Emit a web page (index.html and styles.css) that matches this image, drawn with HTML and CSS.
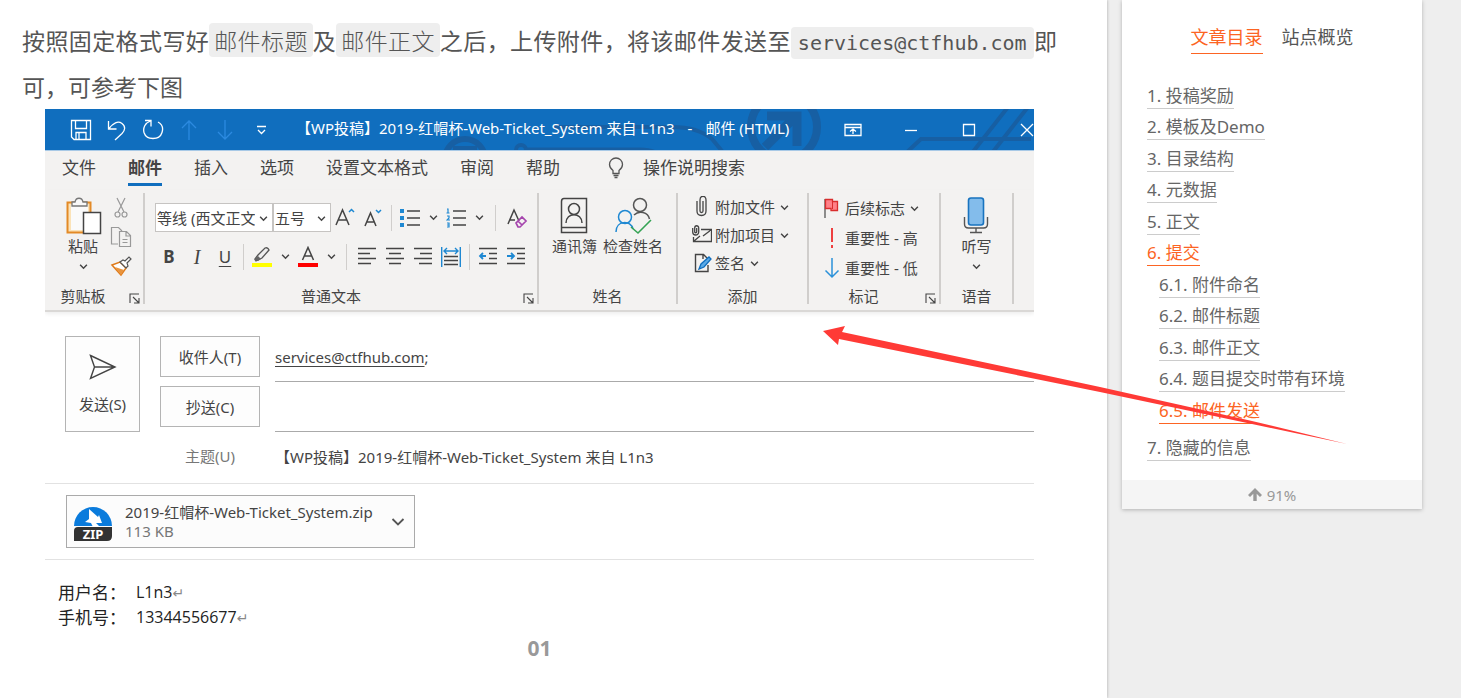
FILE: index.html
```html
<!DOCTYPE html>
<html lang="zh-CN">
<head>
<meta charset="utf-8">
<title>投稿说明</title>
<link rel="stylesheet" href="styles.css">
</head>
<body>
<svg width="0" height="0" class="defs" aria-hidden="true">
  <symbol id="chev" viewBox="0 0 8 8"><path d="M1 2.500 4 5.500 7 2.500" fill="none" stroke="#444" stroke-width="1.3"/></symbol>
  <symbol id="launch" viewBox="0 0 11 11"><path d="M1 10V1h9M4 4l5.500 5.500M10 5v5H5" fill="none" stroke="#444" stroke-width="1.100"/></symbol>
</svg>
<div class="page">
  <main class="article">
    <p class="lead">按照固定格式写好<code class="zh">邮件标题</code>及<code class="zh">邮件正文</code>之后，上传附件，将该邮件发送至<code>services@ctfhub.com</code>即可，可参考下图</p>
    <figure class="shot">
      <div class="window">
        <header class="titlebar">
          <svg class="deco" width="600" height="41" viewBox="0 0 600 41" fill="none" stroke="#175fa3" stroke-width="6">
            <circle cx="31" cy="50" r="20"/><path d="M19 41h24" stroke-width="8"/><circle cx="87" cy="41" r="5" stroke-width="4"/><path d="M90 40h116q14 0 20 6" stroke-width="3"/><path d="M120 18h118q26 0 40 12l10 12" stroke-width="4"/><circle cx="350" cy="18" r="33" stroke-width="8"/><path d="M331 38l28-28M333 7h30v30" stroke-width="9"/><path d="M472 44l15-14h110M538 44l36-46M558 44l36-46" stroke-width="4"/>
          </svg>
          <div class="quick">
            <button aria-label="保存"><svg width="22" height="22" viewBox="0 0 22 22"><path d="M1.500 1.500h19v19H4l-2.500-2.500zM5.500 1.500v8h11v-8M6 20.500v-7h10v7M9 14v6"/></svg></button>
            <button aria-label="撤消"><svg width="22" height="22" viewBox="0 0 22 22"><path d="M2.500 2v8h8M3 9.500C7 4 12 1.500 16 4.500s3 7 0 10L9 21"/></svg></button>
            <button aria-label="恢复"><svg width="22" height="22" viewBox="0 0 22 22"><path d="M3 1.500h6v6M8.500 2C3 4 .8 9 2 13.500c2.500 8 15.500 8 18 0C21.500 9 19.500 5 16 3"/></svg></button>
            <button class="dim" aria-label="上一项"><svg width="22" height="22" viewBox="0 0 22 22"><path d="M11 21V2M4 9l7-7 7 7"/></svg></button>
            <button class="dim" aria-label="下一项"><svg width="22" height="22" viewBox="0 0 22 22"><path d="M11 1v19M4 13l7 7 7-7"/></svg></button>
            <button aria-label="自定义"><svg width="22" height="22" viewBox="0 0 22 22"><path d="M7 7.500h9M8 11l3.500 3.500L15 11"/></svg></button>
          </div>
          <div class="title"><span>【WP投稿】2019-红帽杯-Web-Ticket_System 来自 L1n3</span><span>-</span><span>邮件 (HTML)</span></div>
          <div class="controls">
            <button aria-label="功能区选项"><svg width="18" height="14" viewBox="0 0 18 14"><path d="M1 1.500h16v11H1zM1 4.500h16M9 11V6M6 8.500 9 6l3 2.500"/></svg></button>
            <button aria-label="最小化"><svg width="14" height="14" viewBox="0 0 14 14"><path d="M1 7.500h12"/></svg></button>
            <button aria-label="最大化"><svg width="14" height="14" viewBox="0 0 14 14"><path d="M1.500 1.500h11v11h-11z"/></svg></button>
            <button aria-label="关闭"><svg width="14" height="14" viewBox="0 0 14 14"><path d="M1 1l12 12M13 1 1 13"/></svg></button>
          </div>
        </header>
        <nav class="tabs">
          <button>文件</button><button class="on">邮件</button><button>插入</button><button>选项</button><button>设置文本格式</button><button>审阅</button><button>帮助</button>
          <button class="tell"><svg width="18" height="22" viewBox="0 0 18 22" fill="none" stroke="#555" stroke-width="1.300"><path d="M6 16.500v-3C3.500 11.500 2.500 10 2.500 7.500a6.500 6.500 0 0 1 13 0c0 2.500-1 4-3.500 6v3zM6.500 18.500h5M7.500 20.500h3"/></svg>操作说明搜索</button>
        </nav>
        <div class="ribbon">
          <section class="group g-clip">
            <div class="body">
              <button class="big"><svg width="38" height="40" viewBox="0 0 38 40" fill="none"><path d="M3.500 6.500h23v30h-23z" fill="#fbe3b8" stroke="#e38a26" stroke-width="2"/><path d="M7 9h17v25H7z" fill="#fafafa"/><path d="M8 10V6h3c1-5 7-5 8 0h4v4z" fill="#f8f8f8" stroke="#777" stroke-width="1.300"/><path d="M19.500 16.500h17v21h-17z" fill="#fff" stroke="#444" stroke-width="1.500"/></svg><span>粘贴</span><svg class="chev"><use href="#chev"/></svg></button>
              <div class="stack">
                <button aria-label="剪切"><svg width="22" height="22" viewBox="0 0 22 22" fill="none" stroke="#999" stroke-width="1.200"><path d="M7 1l7 14M15 1 8 15"/><circle cx="7.500" cy="17.500" r="2.500"/><circle cx="14.500" cy="17.500" r="2.500"/></svg></button>
                <button aria-label="复制"><svg width="22" height="22" viewBox="0 0 22 22" fill="none" stroke="#999" stroke-width="1.200"><path d="M8 18H1.500V1.500h7L12 5M9.500 5.500h7l4 4v11h-11zM16 6v4h4M12.500 13.500h5M12.500 16.500h5"/></svg></button>
                <button aria-label="格式刷"><svg width="22" height="22" viewBox="0 0 22 22"><path d="M2 10l8-3 6 6-5 7z" fill="#fff" stroke="#e07b1a" stroke-width="1.500"/><path d="M5 12l9 3-3 5z" fill="#e8943e"/><path d="M10 7l3-2 2 1 4-4 2 2-4 4 1 3-2 2z" fill="#fff" stroke="#555" stroke-width="1.200"/></svg></button>
              </div>
            </div>
            <h3>剪贴板</h3><svg class="launch"><use href="#launch"/></svg>
          </section>
          <section class="group g-text">
            <div class="body rows">
              <div class="row">
                <label class="pick font"><select aria-label="字体"><option>等线 (西文正文)</option></select><svg class="chev"><use href="#chev"/></svg></label>
                <label class="pick size"><select aria-label="字号"><option>五号</option></select><svg class="chev"><use href="#chev"/></svg></label>
                <button class="tool" aria-label="增大字号"><svg width="20" height="22" viewBox="0 0 20 22" fill="none" stroke="#444" stroke-width="1.500"><path d="M1 18 7.500 3 14 18M3.500 13h8"/><path d="M14 5l2.500-2.500L19 5" stroke="#1e88d2"/></svg></button>
                <button class="tool" aria-label="减小字号"><svg width="20" height="22" viewBox="0 0 20 22" fill="none" stroke="#444" stroke-width="1.500"><path d="M2 19 7.500 6 13 19M4 15h7"/><path d="M13 3l2.500 2.500L18 3" stroke="#1e88d2"/></svg></button>
                <i class="bar"></i>
                <button class="tool" aria-label="项目符号"><svg width="20" height="20" viewBox="0 0 20 20"><path d="M0 1h4v4H0zM0 8h4v4H0zM0 15h4v4H0z" fill="#1e88d2"/><path d="M7 3h13M7 10h13M7 17h13" stroke="#444" stroke-width="1.300"/></svg></button>
                <button class="drop" aria-label="符号样式"><svg class="chev"><use href="#chev"/></svg></button>
                <button class="tool" aria-label="编号"><svg width="20" height="20" viewBox="0 0 20 20" fill="none"><path d="M1 1h1v4M.5 5h3M1 8h2v2L1 12h3M1 15h2v2H1M3 17v2H1" stroke="#1e88d2" stroke-width="1.200"/><path d="M7 3h13M7 10h13M7 17h13" stroke="#444" stroke-width="1.300"/></svg></button>
                <button class="drop" aria-label="编号样式"><svg class="chev"><use href="#chev"/></svg></button>
                <i class="bar wide"></i>
                <button class="tool" aria-label="清除格式"><svg width="22" height="22" viewBox="0 0 22 22" fill="none"><path d="M2 17 8 3l5 11M4 13h5" stroke="#444" stroke-width="1.500"/><path d="M10 16l6-6 4 4-6 6h-2zM12 14l4 4" stroke="#a544ad" stroke-width="1.700"/></svg></button>
              </div>
              <div class="row">
                <button class="tool"><b>B</b></button><button class="tool"><em>I</em></button><button class="tool"><u>U</u></button>
                <i class="bar"></i>
                <button class="tool" aria-label="突出显示"><svg width="22" height="22" viewBox="0 0 22 22"><path d="M4 13l3-4 7-7q3-1 4 2l-7 8-6 3z" fill="#eee" stroke="#555" stroke-width="1.300"/><path d="M3 14l4-4 3 3-3 2z" fill="#666"/><path d="M1 17h20v4H1z" fill="#ff0"/></svg></button>
                <button class="drop" aria-label="突出显示颜色"><svg class="chev"><use href="#chev"/></svg></button>
                <button class="tool" aria-label="字体颜色"><svg width="22" height="22" viewBox="0 0 22 22"><path d="M5.500 14 11 1.500 16.500 14M7.500 10h7" fill="none" stroke="#444" stroke-width="1.500"/><path d="M1 17h20v4H1z" fill="#f00"/></svg></button>
                <button class="drop" aria-label="选择字体颜色"><svg class="chev"><use href="#chev"/></svg></button>
                <i class="bar mid"></i>
                <button class="tool" aria-label="左对齐"><svg width="20" height="20" viewBox="0 0 20 20"><path d="M1 1.500h18M1 6.500h12M1 11.500h18M1 16.500h13" stroke="#444" stroke-width="1.400"/></svg></button>
                <button class="tool" aria-label="居中"><svg width="20" height="20" viewBox="0 0 20 20"><path d="M1 1.500h18M4 6.500h12M1 11.500h18M4 16.500h12" stroke="#444" stroke-width="1.400"/></svg></button>
                <button class="tool" aria-label="右对齐"><svg width="20" height="20" viewBox="0 0 20 20"><path d="M1 1.500h18M7 6.500h12M1 11.500h18M6 16.500h13" stroke="#444" stroke-width="1.400"/></svg></button>
                <button class="tool" aria-label="分散对齐"><svg width="20" height="22" viewBox="0 0 20 22" fill="none"><path d="M.7 1v20M19.300 1v20M3 5h14M6 2 3 5l3 3M14 2l3 3-3 3" stroke="#1e88d2" stroke-width="1.400"/><path d="M3 10.500h14M3 14.500h14M3 18.500h14" stroke="#444" stroke-width="1.300"/></svg></button>
                <i class="bar"></i>
                <button class="tool" aria-label="减少缩进"><svg width="20" height="20" viewBox="0 0 20 20" fill="none"><path d="M1 1.500h18M11 6.500h8M11 11.500h8M1 16.500h18" stroke="#444" stroke-width="1.400"/><path d="M8 9H2M5 6 2 9l3 3" stroke="#1e88d2" stroke-width="1.800"/></svg></button>
                <button class="tool" aria-label="增加缩进"><svg width="20" height="20" viewBox="0 0 20 20" fill="none"><path d="M1 1.500h18M11 6.500h8M11 11.500h8M1 16.500h18" stroke="#444" stroke-width="1.400"/><path d="M1 9h7M5 6l3 3-3 3" stroke="#1e88d2" stroke-width="1.800"/></svg></button>
              </div>
            </div>
            <h3>普通文本</h3><svg class="launch"><use href="#launch"/></svg>
          </section>
          <section class="group g-names">
            <div class="body">
              <button class="big"><svg width="28" height="40" viewBox="0 0 28 40" fill="none" stroke="#444" stroke-width="1.500"><path d="M26.500 2.500H4q-2.500 0-2.500 3v31h25zM2 31.500h24.500"/><circle cx="14" cy="13" r="5.500"/><path d="M6 27c0-11 16-11 16 0" /></svg><span>通讯簿</span></button>
              <button class="big"><svg width="38" height="40" viewBox="0 0 38 40" fill="none" stroke-width="1.500"><circle cx="26" cy="9" r="6.500" stroke="#555"/><path d="M20 19c5-5 14-3 15.500 4" stroke="#555"/><circle cx="11" cy="21" r="6.500" stroke="#1e88d2"/><path d="M2 36c0-12 15-12 17-3" stroke="#1e88d2"/><path d="M17 31l7 6 13-13" stroke="#35a354" stroke-width="1.600"/></svg><span>检查姓名</span></button>
            </div>
            <h3>姓名</h3>
          </section>
          <section class="group g-add">
            <div class="body list">
              <button><svg width="20" height="22" viewBox="0 0 20 22" fill="none" stroke="#444" stroke-width="1.300"><path d="M5 5v10c0 6 9 6 9 0V4c0-5-6-5-6 0v11c0 2 3 2 3 0V5"/></svg>附加文件<svg class="chev"><use href="#chev"/></svg></button>
              <button><svg width="20" height="22" viewBox="0 0 20 22" fill="none" stroke="#444" stroke-width="1.300"><path d="M9 5.500h10.500v12h-18V13M11 12l8-6M2 17l6-5"/><path d="M.7 4v4c0 4 6 4 6 0V4c0-3-4-3-4 0v4c0 1 2 1 2 0V4"/></svg>附加项目<svg class="chev"><use href="#chev"/></svg></button>
              <button><svg width="20" height="22" viewBox="0 0 20 22" fill="none"><path d="M16 13v6.500H3.500v-17h8l4 4M11 3v4" stroke="#444" stroke-width="1.400"/><path d="M7 17l2-5 8-7 2 2-7 8z" fill="#5aa9e6" stroke="#106ebe" stroke-width="1.300"/></svg>签名<svg class="chev"><use href="#chev"/></svg></button>
            </div>
            <h3>添加</h3>
          </section>
          <section class="group g-mark">
            <div class="body list">
              <button><svg width="20" height="22" viewBox="0 0 20 22"><path d="M3 2v19" stroke="#555" stroke-width="1.300"/><path d="M3.500 2.500h7v2h5v9H9v-2H3.500z" fill="#ff8088" stroke="#d92d2d" stroke-width="1.300"/><path d="M10.500 4v8" stroke="#d92d2d"/></svg>后续标志<svg class="chev"><use href="#chev"/></svg></button>
              <button><svg width="20" height="22" viewBox="0 0 20 22"><path d="M10 1v14M10 18v3" stroke="#ee3f3f" stroke-width="2"/></svg>重要性 - 高</button>
              <button><svg width="20" height="22" viewBox="0 0 20 22" fill="none" stroke="#2b91d9" stroke-width="1.500"><path d="M10 1v19M3.500 13.500 10 20l6.500-6.500"/></svg>重要性 - 低</button>
            </div>
            <h3>标记</h3><svg class="launch"><use href="#launch"/></svg>
          </section>
          <section class="group g-voice">
            <div class="body">
              <button class="big"><svg width="26" height="40" viewBox="0 0 26 40" fill="none"><rect x="5.500" y="2" width="15" height="27" rx="2.500" fill="#83bceb" stroke="#1873bf" stroke-width="1.600"/><path d="M1.500 21v7q0 4 4 4h15q4 0 4-4v-7M13 32v4M7 36.500h12" stroke="#555" stroke-width="1.400"/></svg><span>听写</span><svg class="chev"><use href="#chev"/></svg></button>
            </div>
            <h3>语音</h3>
          </section>
        </div>
        <div class="compose">
          <button class="send"><svg width="28" height="26" viewBox="0 0 28 26" fill="none" stroke="#444" stroke-width="1.400"><path d="M1.500 1.500 26 13 1.500 24.500l4-11.500zM5.500 13H26"/></svg>发送(S)</button>
          <button class="to">收件人(T)</button>
          <div class="line"><a href="mailto:services@ctfhub.com">services@ctfhub.com</a>;</div>
          <button class="cc">抄送(C)</button>
          <input class="line" aria-label="抄送">
          <label class="subj" for="subject">主题(U)</label>
          <input class="subject" id="subject" value="【WP投稿】2019-红帽杯-Web-Ticket_System 来自 L1n3">
        </div>
        <div class="attachments">
          <button class="file">
            <svg width="40" height="40" viewBox="0 0 40 40"><path d="M1 24a19 19 0 1 1 38 0z" fill="#0a7bdc"/><path d="M16 7l9 8 1-2 3 8h-6l4 4h-7l-2-4-6-1 4-3z" fill="#fff"/><path d="M5 25h34v9q0 5-5 5H1V29q0-4 4-4z" fill="#333"/><text x="20" y="37" text-anchor="middle" class="zip">ZIP</text></svg>
            <span class="meta"><span>2019-红帽杯-Web-Ticket_System.zip</span><span class="kb">113 KB</span></span>
            <svg width="14" height="10" viewBox="0 0 14 10"><path d="M1.500 2 7 7.500 12.500 2" fill="none" stroke="#555" stroke-width="1.800"/></svg>
          </button>
        </div>
        <dl class="mail">
          <dt>用户名：</dt><dd>L1n3<span>↵</span></dd>
          <dt>手机号：</dt><dd>13344556677<span>↵</span></dd>
        </dl>
      </div>
      <figcaption>01</figcaption>
    </figure>
  </main>
  <aside class="side">
    <nav class="switch"><a class="on" href="#toc">文章目录</a><a href="#site">站点概览</a></nav>
    <ol class="toc" id="toc">
      <li><a href="#1">1. 投稿奖励</a></li>
      <li><a href="#2">2. 模板及Demo</a></li>
      <li><a href="#3">3. 目录结构</a></li>
      <li><a href="#4">4. 元数据</a></li>
      <li><a href="#5">5. 正文</a></li>
      <li><a class="on" href="#6">6. 提交</a>
        <ol>
          <li><a href="#61">6.1. 附件命名</a></li>
          <li><a href="#62">6.2. 邮件标题</a></li>
          <li><a href="#63">6.3. 邮件正文</a></li>
          <li><a href="#64">6.4. 题目提交时带有环境</a></li>
          <li><a class="on" href="#65">6.5. 邮件发送</a></li>
        </ol>
      </li>
      <li><a href="#7">7. 隐藏的信息</a></li>
    </ol>
    <button class="top"><svg width="14" height="13" viewBox="0 0 14 13"><path d="M7 0l7 7-2 2-3.300-3.300V13H5.300V5.700L2 9 0 7z" fill="#999"/></svg>91%</button>
  </aside>
</div>
<svg class="pointer" width="526" height="120" viewBox="0 0 526 120"><path d="M1 5 23 0 20 6 278 61 430 95 525 118 430 98 278 66 17 13 16 19z" fill="#ff3a36"/></svg>
</body>
</html>
```
FILE: styles.css
```css
* { box-sizing: border-box; }
body { margin: 0; background: #eee; color: #555; font-family: "Noto Sans", "Noto Sans CJK SC", sans-serif; overflow-x: hidden; }
button, input, select { font: inherit; color: inherit; border: 0; background: none; padding: 0; margin: 0; outline: 0; }
button { display: flex; align-items: center; justify-content: center; }
svg { flex: none; display: block; }
.defs { position: absolute; }
.page { display: flex; align-items: flex-start; gap: 15px; padding-right: 39px; }
.article { flex: 1; min-width: 0; min-height: 100vh; padding: 17px 50px 0 22px; background: #fff; box-shadow: 0 0 3px rgba(0,0,0,.3); }
.lead { margin: 0; font-family: "Noto Sans CJK SC", sans-serif; font-size: 23px; line-height: 46px; text-align: justify; }
.lead code { font-family: "DejaVu Sans Mono", monospace; font-size: 20px; line-height: 1; padding: 4px 7px; border-radius: 4px; background: #eee; }
.lead code.zh { font-family: "Noto Sans CJK SC", sans-serif; font-size: 23px; font-weight: 300; padding: 0 5px; }
.shot { margin: 0 23px; }
figcaption { text-align: center; font-size: 21px; font-weight: 700; line-height: 30px; color: #999; }
.window { overflow: hidden; font-size: 15px; line-height: 20px; color: #444; }

.titlebar { position: relative; display: flex; align-items: center; height: 41px; padding-left: 18px; background: #106ebe; color: #fff; }
.deco { position: absolute; top: 0; right: 0; }
.quick, .controls, .title { position: relative; display: flex; }
.titlebar path { fill: none; }
.quick svg, .controls svg { stroke: #fff; stroke-width: 1.3px; }
.quick button { width: 36px; height: 40px; }
.quick .dim svg { stroke: #2c8ae0; }
.title { flex: 1; min-width: 0; gap: 13px; margin-left: 17px; white-space: nowrap; line-height: 36px; height: 40px; }
.controls { margin-right: -22px; }
.controls button { width: 58px; height: 38px; }

.tabs { display: flex; gap: 32px; padding-left: 17px; height: 40px; background: #f3f2f1; font-size: 17px; border-top: 1px solid #a8c9e6; }
.tabs button { height: 35px; padding-top: 2px; white-space: nowrap; border-bottom: 3px solid transparent; }
.tabs .on { font-weight: 700; border-color: #106ebe; }
.tabs .tell { gap: 18px; margin-left: 15px; }

.ribbon { display: flex; height: 122px; padding: 3px 0 6px; background: #f3f2f1; border-bottom: 2px solid #dad8d6; box-shadow: 0 2px 4px #eee; }
.group { position: relative; display: flex; flex-direction: column; border-right: 2px solid #d0cecc; }
.group h3 { margin: 0; font-size: 15px; font-weight: 400; line-height: 16px; text-align: center; }
.body { flex: 1; display: flex; }
.g-clip { flex: 0 0 100px; }
.g-clip h3 { padding-right: 22px; }
.g-text { flex: 0 0 394px; padding-left: 10px; }
.g-text h3 { padding-right: 30px; }
.g-names { flex: 0 0 139px; }
.g-names .body { justify-content: center; gap: 6px; }
.g-add { flex: 0 0 131px; padding-left: 14px; }
.g-add h3 { padding-right: 14px; }
.g-mark { flex: 0 0 132px; padding-left: 13px; }
.g-mark h3 { padding-right: 34px; }
.g-voice { flex: 0 0 73px; }
.g-voice .body { justify-content: center; }
.launch { position: absolute; right: 3px; bottom: 0; width: 11px; height: 11px; }
.chev { width: 9px; height: 9px; }
.big { flex-direction: column; justify-content: flex-start; align-self: flex-start; padding-top: 3px; white-space: nowrap; }
.big .chev { margin-top: 6px; }
.g-clip .big { margin-left: 19px; }
.stack { display: flex; flex-direction: column; gap: 7px; padding: 4px 0 0 8px; }
.rows { flex-direction: column; gap: 10px; padding-top: 10px; }
.row { display: flex; align-items: center; height: 29px; }
.tool { width: 28px; height: 28px; font-size: 18px; }
.tool b { font-size: 17px; }
.tool em { font-family: "Liberation Serif", serif; font-size: 20px; }
.tool u { text-underline-offset: 3px; font-size: 17px; }
.drop { width: 18px; height: 28px; }
.bar { width: 1px; height: 26px; margin: 0 4px; background: #d0cecc; }
.bar.mid { margin: 0 6px; }
.bar.wide { margin: 0 7px; }
.pick { position: relative; height: 29px; border: 1px solid #c6c4c2; background: #fff; }
.font { width: 118px; }
.size { width: 58px; }
.pick select { appearance: none; width: 100%; height: 100%; padding: 0 17px 0 1px; text-overflow: clip; }
.pick .chev { position: absolute; right: 4px; top: 10px; pointer-events: none; }
.list { flex-direction: column; justify-content: flex-start; }
.list button { justify-content: flex-start; height: 28px; gap: 3px; white-space: nowrap; }
.list .chev { margin-left: 2px; }
.g-mark .list button { height: 30px; }

.compose { display: grid; grid-template-columns: 75px 100px 1fr; column-gap: 20px; row-gap: 4px; padding: 24px 0 6px 20px; }
.compose button { border: 1px solid #b4b4b4; background: #fdfdfd; height: 41px; }
.compose .send { grid-row: 1 / 3; height: 96px; flex-direction: column; gap: 14px; }
.compose .line, .subject { margin-left: -5px; min-width: 0; }
.line { height: 46px; line-height: 42px; border-bottom: 1px solid #aaa; }
.line a { color: inherit; text-underline-offset: 3px; }
.subj { color: #777; line-height: 41px; text-align: center; grid-column: 2; }
.attachments { padding: 11px 21px; border: solid #e2e2e2; border-width: 1px 0; }
.file { height: 53px; border: 1px solid #aaa; background: #fcfcfc; padding: 0 9px 0 6px; text-align: left; }
.meta { display: flex; flex-direction: column; line-height: 19px; margin: 0 18px 0 12px; }
.kb { color: #777; }
.zip { fill: #fff; font-size: 13px; font-weight: 700; }
.mail { display: grid; grid-template-columns: 78px 1fr; margin: 0; padding: 20px 13px 3px; font-size: 17px; line-height: 25px; color: #222; }
.mail dt, .mail dd { height: 25px; }
.mail dd { margin: 0; font-family: "Open Sans", "Noto Sans", sans-serif; font-size: 16px; }
.mail span { color: #888; font-family: "DejaVu Sans", sans-serif; font-size: 14px; line-height: 14px; }

.side { flex: 0 0 300px; padding-top: 21px; background: #fff; box-shadow: 0 1px 4px rgba(0,0,0,.25); font-size: 17px; }
.side a { display: block; width: fit-content; color: #666; text-decoration: none; border-bottom: 1px solid #ccc; white-space: nowrap; }
.side a.on { color: #fc6423; border-color: #fc6423; }
.side .switch { display: flex; justify-content: center; gap: 19px; margin-bottom: 30px; font-size: 18px; line-height: 32px; }
.switch a:not(.on) { border-color: transparent; color: #555; }
.toc, .toc ol { list-style: none; margin: 0; padding: 0 0 6px 12px; }
.side .toc { padding: 0 25px 13px; }
.toc a { line-height: 24px; margin-bottom: .38em; }
.top { width: 100%; height: 29px; gap: 5px; background: #f5f5f5; color: #999; font-size: 15px; }
.pointer { position: absolute; left: 822px; top: 326px; pointer-events: none; }
```
